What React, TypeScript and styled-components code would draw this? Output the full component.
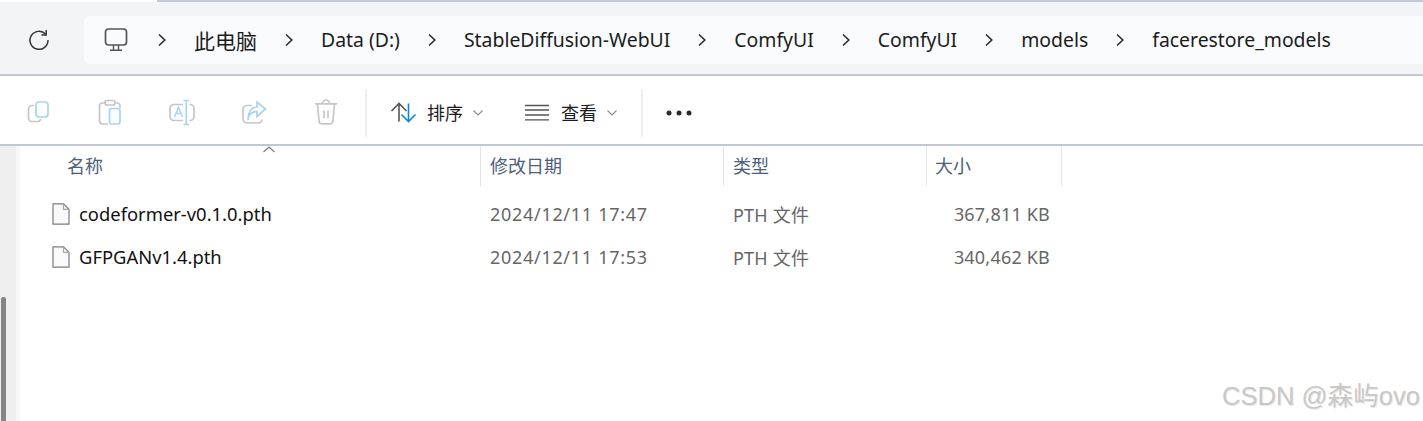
import React from 'react';
import styled, { createGlobalStyle } from 'styled-components';

const GlobalStyle = createGlobalStyle`
  html, body { margin: 0; padding: 0; background: #fff; }
  body { font-family: "Noto Sans", "Noto Sans CJK SC", sans-serif; overflow: hidden; }
`;

const CJK = '"Noto Sans CJK SC", "Noto Sans", sans-serif';

const Page = styled.div`
  position: relative;
  width: 1423px;
  height: 421px;
  overflow: hidden;
  background: #fff;
`;

const TopEdge = styled.div`
  height: 2px;
  margin-left: 157px;
  background: #c3cad3;
`;

const AddressRow = styled.div`
  display: flex;
  align-items: center;
  height: 72px;
  background: #f2f4f7;
  border-bottom: 2px solid #c1c9d2;
`;

const RefreshSlot = styled.div`
  display: flex;
  justify-content: center;
  width: 78px;
  margin-right: 6px;
  margin-top: 3px;
`;

const Crumbs = styled.div`
  display: flex;
  align-items: center;
  gap: 28px;
  flex: 1;
  height: 48px;
  margin-top: 3px;
  padding-left: 20px;
  background: #fafbfd;
  border-radius: 6px 0 0 6px;
`;

const PcIcon = styled.svg`
  margin-right: 2px;
`;

const Crumb = styled.span<{ $cjk?: boolean }>`
  font-size: ${p => (p.$cjk ? '21px' : '19.4px')};
  font-family: ${p => (p.$cjk ? CJK : 'inherit')};
  line-height: 28px;
  color: #1c1c1c;
  white-space: nowrap;
`;

const Toolbar = styled.div`
  display: flex;
  align-items: center;
  height: 62px;
  padding: 6px 0 0 24px;
  background: #fff;
  border-bottom: 2px solid #bfc8d3;
`;

const ActionIcon = styled.svg<{ $last?: boolean }>`
  display: block;
  flex: none;
  margin-right: ${p => (p.$last ? 0 : 44)}px;
  overflow: visible;
`;

const Divider = styled.div<{ $left: number; $right: number }>`
  width: 2px;
  height: 48px;
  margin: 0 ${p => p.$right}px 0 ${p => p.$left}px;
  background: #efefef;
`;

const ToolButton = styled.div<{ $right?: number }>`
  display: flex;
  align-items: center;
  margin-right: ${p => p.$right ?? 0}px;
`;

const ToolLabel = styled.span`
  margin: 0 10px 2px;
  font-family: ${CJK};
  font-size: 18px;
  line-height: 28px;
  color: #1c1c1c;
`;

const Body = styled.div`
  display: flex;
  height: 275px;
`;

const ScrollTrack = styled.div`
  display: flex;
  flex-direction: column;
  justify-content: flex-end;
  box-sizing: border-box;
  width: 20px;
  padding-left: 1px;
  background: #efefef;
  border-right: 4px solid #f7f7f7;
`;

const ScrollThumb = styled.div`
  width: 5px;
  height: 124px;
  border-radius: 2px 2px 0 0;
  background: #858585;
`;

const Listing = styled.div`
  flex: 1;
`;

const HeaderRow = styled.div`
  display: grid;
  grid-template-columns: 461px 243px 203px 135px;
  height: 40px;
  margin-bottom: 6px;
`;

const HeaderCell = styled.div<{ $pad: number }>`
  position: relative;
  display: flex;
  align-items: center;
  padding: 0 0 2px ${p => p.$pad}px;
  font-family: ${CJK};
  font-size: 18px;
  color: #4c607a;
  border-right: 1px solid #e5e5e5;
`;

const SortCaret = styled.svg`
  position: absolute;
  left: 242px;
  top: 0;
`;

const FileRow = styled.div`
  display: grid;
  grid-template-columns: 461px 243px 203px 123px;
  align-items: center;
  height: 43px;
`;

const NameCell = styled.div`
  display: flex;
  align-items: center;
  gap: 9px;
  padding-left: 32px;
  font-size: 18.4px;
  color: #111;
`;

const MetaCell = styled.div<{ $right?: boolean; $spacing?: number }>`
  padding-left: ${p => (p.$right ? 0 : 9)}px;
  text-align: ${p => (p.$right ? 'right' : 'left')};
  font-family: "Noto Sans", "Noto Sans CJK SC", sans-serif;
  font-size: 18px;
  letter-spacing: ${p => p.$spacing ?? 0}px;
  color: #666;
  white-space: nowrap;
`;

const Watermark = styled.div`
  position: absolute;
  right: 3px;
  bottom: 9px;
  font-family: "Liberation Sans", "Noto Sans CJK SC", sans-serif;
  font-size: 25.6px;
  line-height: 32px;
  color: #c8c8c8;
  text-shadow: 1px 1px 1px #e6e6e6;
  white-space: nowrap;
`;

const Chevron = () => (
  <svg width="8" height="14" viewBox="0 0 8 14" fill="none" stroke="#2a2a2a" strokeWidth="1.6">
    <path d="M1 1.5 L6.8 7 L1 12.5" />
  </svg>
);

const SmallCaret = () => (
  <svg width="10" height="6" viewBox="0 0 10 6" fill="none" stroke="#8a8a8a" strokeWidth="1.1">
    <path d="M0.5 0.5 L5 5 L9.5 0.5" />
  </svg>
);

const GREY = '#c6c6c6';
const BLUE = '#a9d3f5';

const icon = { width: 28, height: 28, viewBox: '0 0 28 28', fill: 'none', strokeWidth: 1.7 };

const crumbs = ['此电脑', 'Data (D:)', 'StableDiffusion-WebUI', 'ComfyUI', 'ComfyUI', 'models', 'facerestore_models'];

const FileIcon = () => (
  <svg width="18" height="22" viewBox="0 0 18 22" fill="#fafafc" stroke="#7d7d7d" strokeWidth="1.2">
    <path d="M1 .8 H11.5 L17 6.3 V21.2 H1 Z" />
    <path d="M11.5 .8 V6.3 H17" fill="none" stroke="#a8a8a8" />
  </svg>
);

const files = [
  { name: 'codeformer-v0.1.0.pth', date: '2024/12/11 17:47', size: '367,811 KB' },
  { name: 'GFPGANv1.4.pth', date: '2024/12/11 17:53', size: '340,462 KB' },
];

export default function App() {
  return (
    <Page>
      <GlobalStyle />
      <TopEdge />
      <AddressRow>
        <RefreshSlot>
          <svg width="24" height="24" viewBox="0 0 24 24" fill="none" stroke="#333" strokeWidth="1.5">
            <path d="M18.6 6.2 A9 9 0 1 0 21 12" />
            <path d="M19.2 2 V6.9 H14.4" />
          </svg>
        </RefreshSlot>
        <Crumbs>
          <PcIcon width="24" height="24" viewBox="0 0 24 24" fill="none" stroke="#555" strokeWidth="1.7">
            <rect x="1.5" y="1" width="21" height="16" rx="3" />
            <path d="M9.5 17 V22 M14.5 17 V22 M6 22.2 H18" strokeWidth="1.4" />
          </PcIcon>
          {crumbs.map((c, i) => (
            <React.Fragment key={i}>
              <Chevron />
              <Crumb $cjk={i === 0}>{c}</Crumb>
            </React.Fragment>
          ))}
        </Crumbs>
      </AddressRow>
      <Toolbar>
        <ActionIcon {...icon}>
          <rect x="12" y="3" width="12" height="15" rx="3" stroke={BLUE} />
          <path d="M10 6.5 H8 A3.5 3.5 0 0 0 4.5 10 V19 A3.5 3.5 0 0 0 8 22.5 H13.5 A3.5 3.5 0 0 0 16.8 20" stroke={GREY} />
        </ActionIcon>
        <ActionIcon {...icon}>
          <path d="M9 4 H6.5 A3 3 0 0 0 3.5 7 V22 A3 3 0 0 0 6.5 25 H12 M21 4 H18.5 M21 4 A3 3 0 0 1 24 7 V9" stroke={GREY} />
          <rect x="9" y="1.5" width="10" height="4.5" rx="2" stroke={GREY} />
          <rect x="13.5" y="9.5" width="10.5" height="15.5" rx="2.5" stroke={BLUE} fill="#fbfdff" />
        </ActionIcon>
        <ActionIcon {...icon}>
          <path d="M15 5.5 H6 A4 4 0 0 0 2 9.5 V17.5 A4 4 0 0 0 6 21.5 H15 M21.5 5.5 H22 A4 4 0 0 1 26 9.5 V17.5 A4 4 0 0 1 22 21.5 H21.5" stroke={GREY} />
          <path d="M18.3 1.5 V25.5 M15.5 1.5 H21.2 M15.5 25.5 H21.2" stroke={BLUE} />
          <path d="M6.5 18 L10.5 8.5 L14.5 18 M8 14.5 H13" stroke={BLUE} strokeWidth="1.5" />
        </ActionIcon>
        <ActionIcon {...icon}>
          <path d="M12 6.5 H7 A4 4 0 0 0 3 10.5 V20 A4 4 0 0 0 7 24 H18 A4 4 0 0 0 22 20.5" stroke={GREY} />
          <path d="M8 21 C8.5 15 12 12.5 17 12.5 V17.5 L25.5 10 L17 3 V8 C11 8.5 8 13 8 21 Z" stroke={BLUE} fill="#fff" />
        </ActionIcon>
        <ActionIcon {...icon} $last>
          <path d="M3 4.8 H25 M10.5 4.5 A3.5 3.5 0 0 1 17.5 4.5" stroke={GREY} />
          <path d="M5.5 5 L7 22 A3 3 0 0 0 10 24.8 H18 A3 3 0 0 0 21 22 L22.5 5" stroke={GREY} />
          <path d="M12 11.5 V19 M16 11.5 V19" stroke={GREY} />
        </ActionIcon>
        <Divider $left={25} $right={22} />
        <ToolButton $right={40}>
          <svg width="28" height="28" viewBox="0 0 28 28" fill="none" strokeWidth="1.6">
            <path d="M10 22.5 V4.5 M2.5 12 L10 4.5 L17.5 12" stroke="#555" />
            <path d="M19.5 4.5 V22.5 M12.5 15.5 L19.5 22.5 L26.5 15.5" stroke="#0f86de" />
          </svg>
          <ToolLabel>排序</ToolLabel>
          <SmallCaret />
        </ToolButton>
        <ToolButton>
          <svg width="28" height="28" viewBox="0 0 28 28" fill="none" stroke="#555" strokeWidth="1.3">
            <path d="M2 6.5 H26 M2 11 H26 M2 16 H26 M2 20.8 H26" />
          </svg>
          <ToolLabel>查看</ToolLabel>
          <SmallCaret />
        </ToolButton>
        <Divider $left={24} $right={23} />
        <svg width="26" height="6" viewBox="0 0 26 6" fill="#2b2b2b">
          <circle cx="3" cy="3" r="2.5" />
          <circle cx="13" cy="3" r="2.5" />
          <circle cx="23" cy="3" r="2.5" />
        </svg>
      </Toolbar>
      <Body>
        <ScrollTrack>
          <ScrollThumb />
        </ScrollTrack>
        <Listing>
          <HeaderRow>
            <HeaderCell $pad={47}>
              名称
              <SortCaret width="14" height="7" viewBox="0 0 14 7" fill="none" stroke="#777" strokeWidth="1.1">
                <path d="M1.5 6 L7 1 L12.5 6" />
              </SortCaret>
            </HeaderCell>
            <HeaderCell $pad={9}>修改日期</HeaderCell>
            <HeaderCell $pad={9}>类型</HeaderCell>
            <HeaderCell $pad={8}>大小</HeaderCell>
          </HeaderRow>
          {files.map(f => (
            <FileRow key={f.name}>
              <NameCell>
                <FileIcon />
                {f.name}
              </NameCell>
              <MetaCell $spacing={0.7}>{f.date}</MetaCell>
              <MetaCell $spacing={0.2}>PTH 文件</MetaCell>
              <MetaCell $right $spacing={0.2}>{f.size}</MetaCell>
            </FileRow>
          ))}
        </Listing>
      </Body>
      <Watermark>CSDN @森屿ovo</Watermark>
    </Page>
  );
}
